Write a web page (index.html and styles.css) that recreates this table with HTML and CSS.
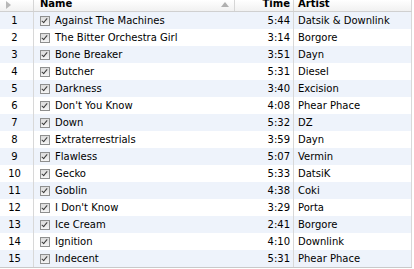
FILE: index.html
```html
<!DOCTYPE html>
<html>
<head>
<meta charset="utf-8">
<link rel="stylesheet" href="styles.css">
</head>
<body>
<div class="list">
  <div class="head">
    <div class="c num"><span class="play"></span></div>
    <div class="c name"><span class="htxt">Name</span><span class="sort"></span></div>
    <div class="c time"><span class="htxt">Time</span></div>
    <div class="c artist"><span class="htxt">Artist</span></div>
  </div>
  <div class="rows">
    <div class="row"><div class="c num">1</div><div class="c name"><span class="chk"></span>Against The Machines</div><div class="c time">5:44</div><div class="c artist">Datsik &amp; Downlink</div></div>
    <div class="row"><div class="c num">2</div><div class="c name"><span class="chk"></span>The Bitter Orchestra Girl</div><div class="c time">3:14</div><div class="c artist">Borgore</div></div>
    <div class="row"><div class="c num">3</div><div class="c name"><span class="chk"></span>Bone Breaker</div><div class="c time">3:51</div><div class="c artist">Dayn</div></div>
    <div class="row"><div class="c num">4</div><div class="c name"><span class="chk"></span>Butcher</div><div class="c time">5:31</div><div class="c artist">Diesel</div></div>
    <div class="row"><div class="c num">5</div><div class="c name"><span class="chk"></span>Darkness</div><div class="c time">3:40</div><div class="c artist">Excision</div></div>
    <div class="row"><div class="c num">6</div><div class="c name"><span class="chk"></span>Don't You Know</div><div class="c time">4:08</div><div class="c artist">Phear Phace</div></div>
    <div class="row"><div class="c num">7</div><div class="c name"><span class="chk"></span>Down</div><div class="c time">5:32</div><div class="c artist">DZ</div></div>
    <div class="row"><div class="c num">8</div><div class="c name"><span class="chk"></span>Extraterrestrials</div><div class="c time">3:59</div><div class="c artist">Dayn</div></div>
    <div class="row"><div class="c num">9</div><div class="c name"><span class="chk"></span>Flawless</div><div class="c time">5:07</div><div class="c artist">Vermin</div></div>
    <div class="row"><div class="c num">10</div><div class="c name"><span class="chk"></span>Gecko</div><div class="c time">5:33</div><div class="c artist">DatsiK</div></div>
    <div class="row"><div class="c num">11</div><div class="c name"><span class="chk"></span>Goblin</div><div class="c time">4:38</div><div class="c artist">Coki</div></div>
    <div class="row"><div class="c num">12</div><div class="c name"><span class="chk"></span>I Don't Know</div><div class="c time">3:29</div><div class="c artist">Porta</div></div>
    <div class="row"><div class="c num">13</div><div class="c name"><span class="chk"></span>Ice Cream</div><div class="c time">2:41</div><div class="c artist">Borgore</div></div>
    <div class="row"><div class="c num">14</div><div class="c name"><span class="chk"></span>Ignition</div><div class="c time">4:10</div><div class="c artist">Downlink</div></div>
    <div class="row"><div class="c num">15</div><div class="c name"><span class="chk"></span>Indecent</div><div class="c time">5:31</div><div class="c artist">Phear Phace</div></div>
  </div>
</div>
</body>
</html>
```
FILE: styles.css
```css
html, body { margin: 0; padding: 0; background: #fff; }
body { font-family: "DejaVu Sans", sans-serif; font-size: 10px; color: #000; }
.list { width: 412px; border-bottom: 1px solid #c9c9c9; }
.head { display: flex; height: 11px; border-bottom: 1px solid #d0d0d0; background: linear-gradient(#ffffff, #f1f1f1); overflow: hidden; }
.head .c { border-right: 1px solid #d6d6d6; position: relative; }
.htxt { font-weight: bold; display: block; line-height: 11px; margin-top: -2px; }
.c { box-sizing: border-box; white-space: nowrap; overflow: hidden; }
.num { width: 34px; text-align: center; padding-right: 4px; border-right: 1px solid #d8d8d8; }
.name { width: 201px; padding-left: 6px; display: flex; align-items: center; }
.head .name { padding-left: 6px; }
.time { width: 59px; text-align: right; padding-right: 3px; border-right: 1px solid #d8d8d8; }
.artist { width: 118px; padding-left: 4px; border-right: 1px solid #d8d8d8; }
.head .time .htxt { text-align: right; }
.play { position: absolute; left: 6px; top: 1px; width: 0; height: 0; border-top: 4px solid transparent; border-bottom: 4px solid transparent; border-left: 5px solid #b8b8b8; }
.sort { position: absolute; right: 5px; top: 2px; width: 0; height: 0; border-left: 4px solid transparent; border-right: 4px solid transparent; border-bottom: 5px solid #b0b0b0; }
.head .name { display: block; }
.row { display: flex; height: 17px; line-height: 17px; }
.row .c { height: 17px; }
.row:nth-child(odd) { background: #eef3fb; }
.chk { display: inline-block; width: 8px; height: 8px; margin-right: 5px; border: 1px solid #8e8f8f; background: linear-gradient(#dcdcdc, #f4f4f4); position: relative; }
.chk::after { content: ""; position: absolute; left: 2px; top: 0px; width: 2px; height: 5px; border-right: 1.5px solid #3c3c3c; border-bottom: 1.5px solid #3c3c3c; transform: rotate(40deg); }
```
